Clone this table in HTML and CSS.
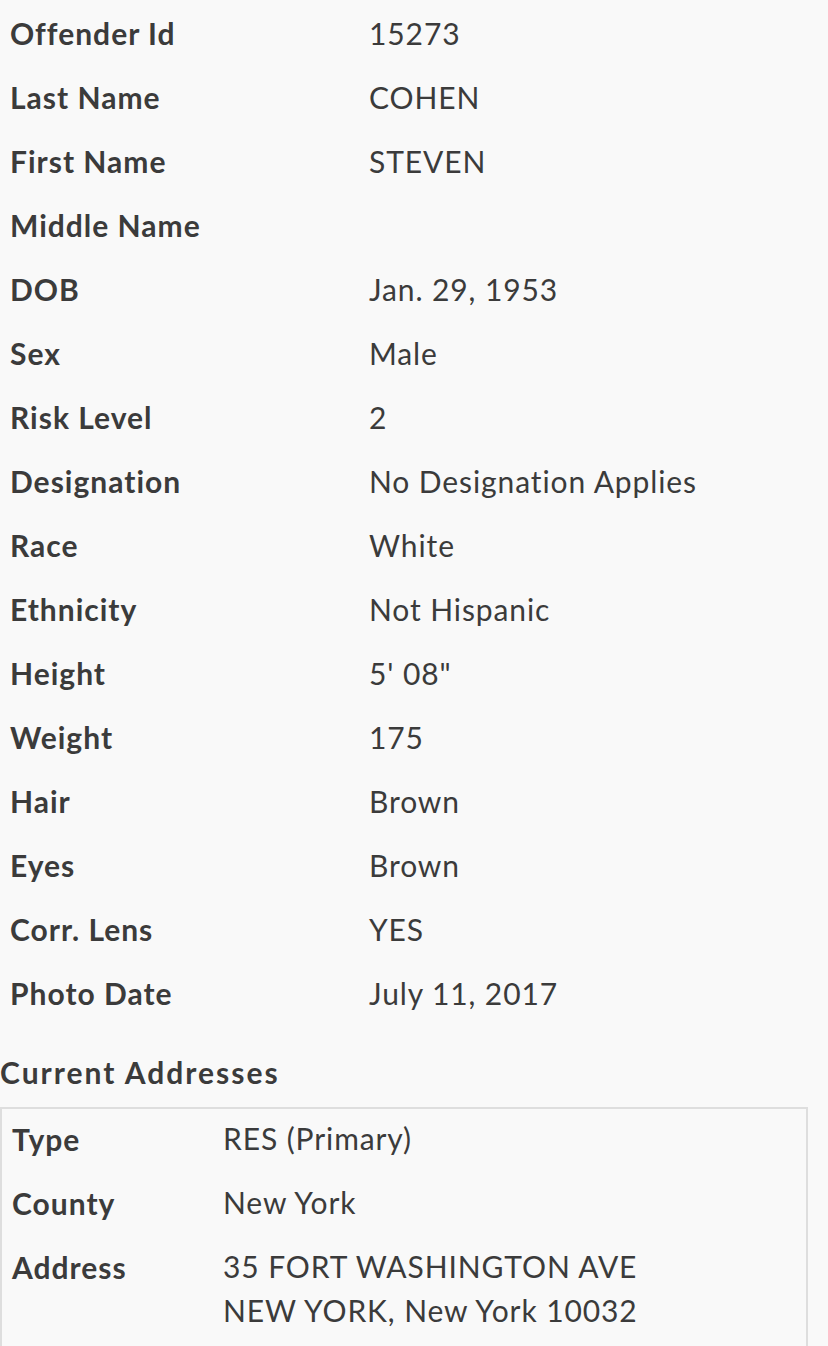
FILE: index.html
```html
<!DOCTYPE html>
<html>
<head>
<meta charset="utf-8">
<link rel="stylesheet" href="styles.css">
</head>
<body>
<div class="page">
  <dl class="details">
    <div class="row"><dt>Offender Id</dt><dd>15273</dd></div>
    <div class="row"><dt>Last Name</dt><dd>COHEN</dd></div>
    <div class="row"><dt>First Name</dt><dd>STEVEN</dd></div>
    <div class="row"><dt>Middle Name</dt><dd></dd></div>
    <div class="row"><dt>DOB</dt><dd>Jan. 29, 1953</dd></div>
    <div class="row"><dt>Sex</dt><dd>Male</dd></div>
    <div class="row"><dt>Risk Level</dt><dd>2</dd></div>
    <div class="row"><dt>Designation</dt><dd>No Designation Applies</dd></div>
    <div class="row"><dt>Race</dt><dd>White</dd></div>
    <div class="row"><dt>Ethnicity</dt><dd>Not Hispanic</dd></div>
    <div class="row"><dt>Height</dt><dd>5' 08"</dd></div>
    <div class="row"><dt>Weight</dt><dd>175</dd></div>
    <div class="row"><dt>Hair</dt><dd>Brown</dd></div>
    <div class="row"><dt>Eyes</dt><dd>Brown</dd></div>
    <div class="row"><dt>Corr. Lens</dt><dd>YES</dd></div>
    <div class="row"><dt>Photo Date</dt><dd>July 11, 2017</dd></div>
  </dl>
  <h2 class="section-title">Current Addresses</h2>
  <div class="address-box">
    <dl class="address">
      <div class="row"><dt>Type</dt><dd>RES (Primary)</dd></div>
      <div class="row"><dt>County</dt><dd>New York</dd></div>
      <div class="row"><dt>Address</dt><dd>35 FORT WASHINGTON AVE<br>NEW YORK, New York 10032</dd></div>
    </dl>
  </div>
</div>
</body>
</html>
```
FILE: styles.css
```css
html, body {
  margin: 0;
  padding: 0;
  background: #f9f9f9;
}
body {
  font-family: Lato, "Open Sans", sans-serif;
  color: #3b3b3b;
  font-size: 30px;
}
.page {
  width: 828px;
}
dl {
  margin: 0;
}
dt, dd {
  margin: 0;
}
.details {
  padding: 1px 0 0 10px;
}
.row {
  display: grid;
  grid-template-columns: 359px 1fr;
  line-height: 64px;
}
.details .row {
  height: 64px;
}
dt {
  font-weight: 700;
  letter-spacing: 1px;
}
dd {
  font-weight: 400;
  letter-spacing: 0.9px;
}
.section-title {
  margin: 0;
  padding: 15px 0 0 0;
  height: 67px;
  line-height: 64px;
  font-size: 30px;
  font-weight: 700;
  letter-spacing: 2px;
}
.address-box {
  margin-left: 0;
  width: 804px;
  border: 2px solid #dedede;
  border-bottom: none;
  height: 300px;
}
.address {
  padding: 0 0 0 10px;
}
.address .row {
  grid-template-columns: 211px 1fr;
}
.address .row:first-child {
  margin-top: -2px;
}
.address dd {
  line-height: 43.5px;
  padding-top: 10px;
}
```
